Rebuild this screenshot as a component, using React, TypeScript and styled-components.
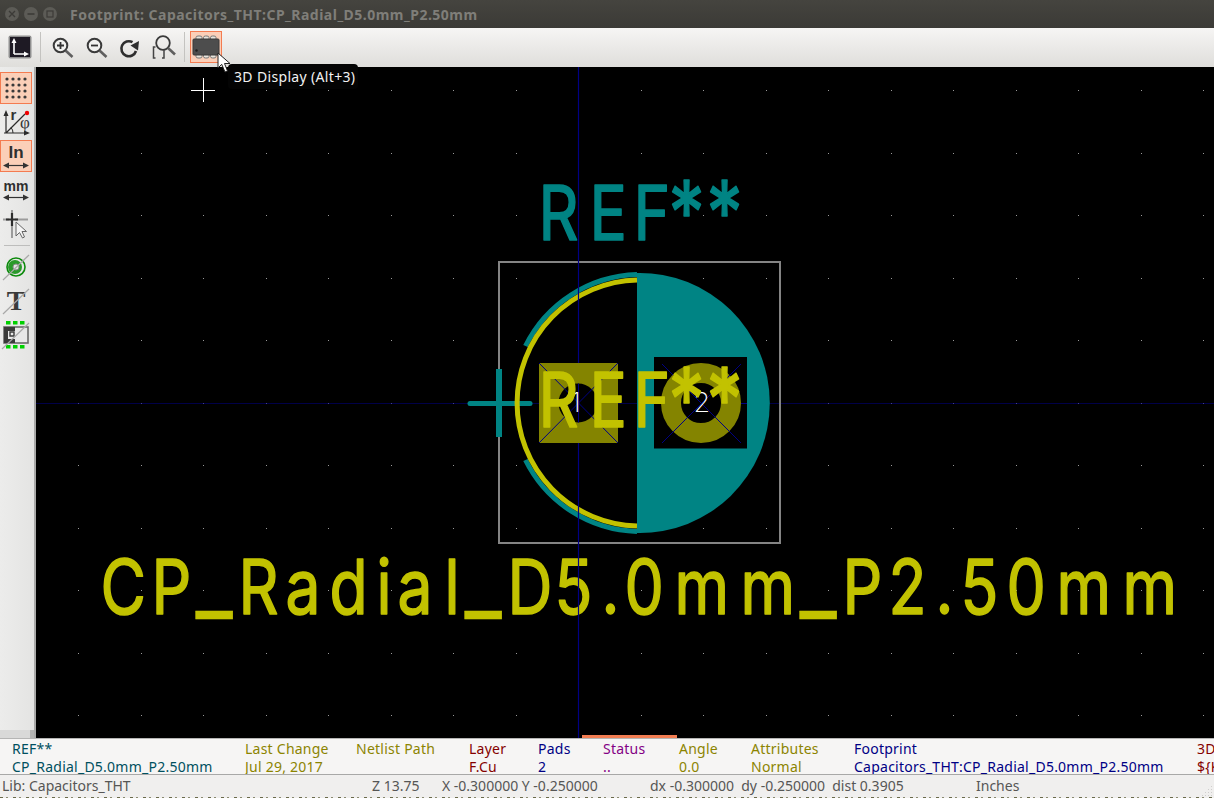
import React from "react";
import styled, { createGlobalStyle } from "styled-components";

const GlobalStyle = createGlobalStyle`
  html, body {
    margin: 0;
    padding: 0;
    background: #000;
  }
  body {
    font-family: "Noto Sans", "Open Sans", sans-serif;
    overflow: hidden;
  }
`;

const TEAL = "#008484";
const YELLOW = "#c2c200";
const PAD = "#848400";
const AXIS = "#000084";

const Window = styled.div`
  position: relative;
  width: 1214px;
  height: 798px;
  display: flex;
  flex-direction: column;
  overflow: hidden;
`;

const TitleBar = styled.div`
  height: 28px;
  flex: none;
  display: flex;
  align-items: center;
  padding-left: 5px;
  background: linear-gradient(#45443f, #3b3a36);
`;

const WindowButtons = styled.div`
  display: flex;
  gap: 5px;
`;

const WindowButton = styled.div`
  width: 14px;
  height: 14px;
  border-radius: 50%;
  background: #5c5b56;
  display: flex;
  align-items: center;
  justify-content: center;
`;

const TitleText = styled.span`
  margin-left: 13px;
  font-size: 14px;
  font-weight: 700;
  letter-spacing: 0.48px;
  color: #7f7e79;
  white-space: nowrap;
`;

const TopToolbar = styled.div`
  height: 39px;
  flex: none;
  display: flex;
  align-items: flex-start;
  gap: 2px;
  padding: 3px 0 0 4px;
  box-sizing: border-box;
  background: linear-gradient(#f6f5f4, #dfdedb);
`;

const ToolButton = styled.div<{ $active?: boolean }>`
  width: 32px;
  height: 32px;
  flex: none;
  box-sizing: border-box;
  display: flex;
  align-items: center;
  justify-content: center;
  border: 1px solid ${(p) => (p.$active ? "#f47b50" : "transparent")};
  background: ${(p) => (p.$active ? "#fbcfb8" : "transparent")};
`;

const VSeparator = styled.div`
  width: 1px;
  height: 30px;
  margin: 1px 3px 0 2px;
  flex: none;
  background: #c4c3c0;
`;

const Main = styled.div`
  flex: 1;
  min-height: 0;
  display: flex;
`;

const LeftToolbar = styled.div`
  width: 36px;
  flex: none;
  box-sizing: border-box;
  display: flex;
  flex-direction: column;
  gap: 2px;
  padding-top: 5px;
  border-right: 2px solid #a9a9a8;
  background: linear-gradient(90deg, #ececeb, #e4e4e3);
`;

const ToolbarFoot = styled.div`
  width: 30px;
  height: 8px;
  margin-top: auto;
  flex: none;
  box-shadow: 4px 0 0 #b4b4b3;
  background: #d9d9d8;
`;

const HSeparator = styled.div`
  height: 1px;
  margin: 3px 4px 3px 4px;
  flex: none;
  background: #bdbdbc;
`;

const Canvas = styled.div`
  position: relative;
  flex: 1;
  min-width: 0;
  background: #000;
`;

const Drawing = styled.svg`
  display: block;
  width: 100%;
  height: 100%;
`;

const SashMark = styled.div`
  position: absolute;
  left: 546px;
  bottom: 0;
  width: 95px;
  height: 3px;
  background: #f27d52;
`;

const MessagePanel = styled.div`
  height: 37px;
  flex: none;
  box-sizing: border-box;
  display: flex;
  padding: 1px 0 0 12px;
  border-top: 1px solid #b5b5b4;
  border-bottom: 1px solid #a8a8a7;
  background: #f6f5f4;
  overflow: hidden;
`;

const MessageColumn = styled.div<{ $width: number; $color: string }>`
  width: ${(p) => p.$width}px;
  flex: none;
  color: ${(p) => p.$color};
  font-size: 14px;
  letter-spacing: 0.24px;
  line-height: 17.5px;
  white-space: nowrap;
`;

const StatusBar = styled.div`
  height: 23px;
  flex: none;
  position: relative;
  box-sizing: border-box;
  display: flex;
  padding: 2px 0 0 2px;
  background: #f0efee;
  color: #565655;
  font-size: 14px;
  line-height: 18px;
  white-space: nowrap;
`;

const StatusField = styled.div<{ $width: number }>`
  width: ${(p) => p.$width}px;
  flex: none;
`;

const Grip = styled.svg`
  position: absolute;
  right: 1px;
  bottom: 2px;
`;

const ClippedStrip = styled.div`
  position: absolute;
  left: 0;
  right: 0;
  bottom: 0;
  height: 1px;
  background: repeating-linear-gradient(90deg, #6a6a4a 0 3px, transparent 3px 6px, #8a8a70 6px 8px, transparent 8px 13px);
`;

const Tooltip = styled.div`
  position: absolute;
  left: 228px;
  top: 64px;
  height: 25px;
  padding: 0 3px 0 6px;
  display: flex;
  align-items: center;
  border-radius: 4px;
  background: #040404;
  color: #f2f2f2;
  font-size: 14px;
  letter-spacing: 0.34px;
  white-space: nowrap;
`;

const Pointer = styled.svg`
  position: absolute;
  left: 217px;
  top: 52px;
`;

const StrokeLabel = styled.text`
  font-family: Inter, "Noto Sans", sans-serif;
  font-size: 76px;
  stroke-linejoin: round;
  stroke-width: 1.6px;
`;

const Underscore = styled.tspan`
  font-size: 100px;
  stroke-width: 0.3px;
`;

const Asterisks = styled.tspan`
  font-size: 88px;
`;

const PadNumber = styled.text`
  font-family: Inter, "Liberation Sans", sans-serif;
  font-weight: 200;
  font-size: 27px;
  fill: #fff;
`;

// glyph positions follow the stroke font of the footprint editor, which is much narrower than Inter
const SQUEEZE = 0.82;

const PlacedText = ({ text, xs, y, color }: { text: string; xs: number[]; y: number; color: string }) => (
  <g transform={`translate(0 ${y}) scale(${SQUEEZE} 1)`}>
    <StrokeLabel x={xs.map((x) => ((x - 3.5) / SQUEEZE).toFixed(1)).join(" ")} y={0} fill={color} stroke={color}>
      {text.split(/(_|\*+)/).map((part, i) => {
        if (part === "_") {
          return (
            <Underscore key={i} y={-3}>
              {part}
            </Underscore>
          );
        }
        if (part.startsWith("*")) {
          return (
            <Asterisks key={i} y={4}>
              {part}
            </Asterisks>
          );
        }
        return (
          <tspan key={i} y={0}>
            {part}
          </tspan>
        );
      })}
    </StrokeLabel>
  </g>
);

const REF_XS = [542, 593, 637, 672, 710];
const VALUE_XS = [
  104, 155, 199, 242, 289, 333, 380, 401, 448, 468, 511, 558, 605, 628, 678, 744, 803, 846, 892, 939, 964, 1010, 1060,
  1126,
];

const Icon = styled.svg`
  display: block;
  overflow: visible;
`;

const OriginIcon = () => (
  <Icon width="24" height="24" viewBox="0 0 24 24">
    <rect x="0.5" y="0.5" width="23" height="23" rx="2" fill="#8f8f8f" />
    <rect x="2" y="2" width="20" height="20" fill="#1e1a24" />
    <path d="M6 19V5M6 19H19" stroke="#fff" strokeWidth="1.6" fill="none" />
    <path d="M6 3L3.5 8H8.5ZM21 19L16 16.5V21.5Z" fill="#fff" />
  </Icon>
);

const Lens = ({ children }: { children?: React.ReactNode }) => (
  <Icon width="22" height="22" viewBox="-1 -1 22 22">
    <circle cx="8.5" cy="8.5" r="6.8" fill="#f2f2f0" stroke="#3a3a3a" strokeWidth="2" />
    <path d="M13.5 13.5L20.5 20" stroke="#5f5f5f" strokeWidth="2.6" />
    {children}
  </Icon>
);

const RedoIcon = () => (
  <Icon width="22" height="22" viewBox="0 0 22 22">
    <path d="M13.5 6.2A7.5 7.5 0 1 0 17 15" fill="none" stroke="#2e2e2e" strokeWidth="2.6" />
    <path d="M20 5L19 14.5L11.5 9.5Z" fill="#2e2e2e" />
  </Icon>
);

const ZoomFitIcon = () => (
  <Icon width="26" height="26" viewBox="0 0 26 26">
    <circle cx="12" cy="9" r="6.8" fill="none" stroke="#3a3a3a" strokeWidth="1.8" />
    <path d="M17 14L24 20.5" stroke="#5f5f5f" strokeWidth="2.6" />
    <path d="M4.5 13H2.5V24H4.5M13 16V24H11" fill="none" stroke="#444" strokeWidth="1.5" />
  </Icon>
);

const ChipIcon = () => (
  <Icon width="28" height="24" viewBox="0 0 28 24">
    <path
      d="M4 4V2.5Q4 1 6 1H8Q10 1 10 2.5V4M11.5 4V2.5Q11.5 1 13.5 1H15Q17 1 17 2.5V4M18.5 4V2.5Q18.5 1 20.5 1H22Q24 1 24 2.5V4M4 20V21.5Q4 23 6 23H8Q10 23 10 21.5V20M11.5 20V21.5Q11.5 23 13.5 23H15Q17 23 17 21.5V20M18.5 20V21.5Q18.5 23 20.5 23H22Q24 23 24 21.5V20"
      fill="#e8e4dc"
      stroke="#777"
    />
    <rect x="1" y="4" width="26" height="16" rx="1" fill="#4d4d4d" stroke="#3a3a3a" />
    <circle cx="4.5" cy="15.5" r="1.2" fill="#1f1f1f" />
  </Icon>
);

const GridIcon = () => (
  <Icon width="24" height="24" viewBox="0 0 24 24">
    {[0, 1, 2, 3].map((row) =>
      [0, 1, 2, 3].map((col) => <circle key={`${row}-${col}`} cx={3 + col * 6} cy={3 + row * 6} r="1.6" fill="#3a3a3a" />),
    )}
  </Icon>
);

const PolarIcon = () => (
  <Icon width="28" height="28" viewBox="0 0 28 28">
    <path d="M4 25V6M2 25H26M4 25L23 6" stroke="#2b2b2b" strokeWidth="1.2" fill="none" />
    <path d="M4 2L1.5 8H6.5ZM28 25L22 22.5V27.5Z" fill="#2b2b2b" />
    <path d="M11 25A8 8 0 0 0 9 19.5" stroke="#2b2b2b" fill="none" />
    <circle cx="25" cy="5" r="2.2" fill="#f00000" />
    <text x="8.5" y="12" fontFamily="Liberation Sans" fontWeight="700" fontSize="15" fill="#333">
      r
    </text>
    <text x="18" y="20" fontFamily="Liberation Serif" fontSize="17" fill="#333">
      φ
    </text>
  </Icon>
);

const UnitIcon = styled.div<{ $large?: boolean }>`
  width: 28px;
  display: flex;
  flex-direction: column;
  align-items: center;
  font-family: "Liberation Sans", sans-serif;
  font-weight: 700;
  font-size: ${(p) => (p.$large ? 17 : 14)}px;
  line-height: ${(p) => (p.$large ? 18 : 15)}px;
  color: #2f2f2f;
`;

const UnitArrow = () => (
  <Icon width="26" height="7" viewBox="0 0 26 7">
    <path d="M3 3.5H23" stroke="#333" strokeWidth="1.2" />
    <path d="M0 3.5L6 0.5V6.5ZM26 3.5L20 0.5V6.5Z" fill="#333" />
  </Icon>
);

const CursorIcon = () => (
  <Icon width="28" height="30" viewBox="0 0 28 30">
    <path d="M10 1V8M10 13V29M1 10.5H7M13 10.5H26" stroke="#9b9b9b" strokeWidth="2" />
    <path d="M10 4V17M4 10.5H16" stroke="#2d2d2d" strokeWidth="2.2" />
    <path d="M14 13V27L17.5 23.5L20.5 29L22.5 28L20 22.5H24.5Z" fill="#f5f5f5" stroke="#666" />
  </Icon>
);

const PadsIcon = () => (
  <Icon width="28" height="28" viewBox="0 0 28 28">
    <circle cx="14" cy="14" r="9" fill="none" stroke="#0c8a0c" strokeWidth="1.6" />
    <circle cx="13" cy="14" r="7" fill="#2a9a2a" />
    <circle cx="14" cy="14" r="3" fill="#dfe8df" stroke="#888" />
    <path d="M1 27L27 2" stroke="#a8a8a8" strokeWidth="1.2" />
  </Icon>
);

const TextIcon = () => (
  <Icon width="28" height="28" viewBox="0 0 28 28">
    <text x="14" y="23" textAnchor="middle" fontFamily="Liberation Serif" fontWeight="700" fontSize="28" fill="#3a3a3a">
      T
    </text>
    <path d="M1 27L27 2" stroke="#a8a8a8" strokeWidth="1.2" />
  </Icon>
);

const ModuleIcon = () => (
  <Icon width="28" height="30" viewBox="0 0 28 30">
    {[4, 11, 18].map((x) => (
      <React.Fragment key={x}>
        <rect x={x} y="1" width="4.5" height="3.5" fill="#00d000" />
        <rect x={x} y="25" width="4.5" height="3.5" fill="#00d000" />
      </React.Fragment>
    ))}
    <rect x="2" y="7" width="24" height="16" fill="#e8e8e8" stroke="#6a6a6a" strokeWidth="1.6" />
    <path d="M2 7H13V11H6V19H13V23H2Z" fill="#3a3a3a" />
    <path d="M8 12H12V16H8Z" fill="none" stroke="#3a3a3a" strokeWidth="1.4" />
    <path d="M0 29L27 3" stroke="#a8a8a8" strokeWidth="1.2" />
  </Icon>
);

const gridDots: [number, number][] = [];
for (let y = 90; y < 738; y += 62.5) {
  for (let x = 78; x < 1214; x += 62.5) {
    gridDots.push([Math.round(x), Math.round(y)]);
  }
}

const COLUMNS = [
  { width: 233, color: "#00505f", label: "REF**", value: "CP_Radial_D5.0mm_P2.50mm" },
  { width: 111, color: "#8c8400", label: "Last Change", value: "Jul 29, 2017" },
  { width: 113, color: "#8c8400", label: "Netlist Path", value: "" },
  { width: 69, color: "#840000", label: "Layer", value: "F.Cu" },
  { width: 65, color: "#000084", label: "Pads", value: "2" },
  { width: 76, color: "#840084", label: "Status", value: ".." },
  { width: 72, color: "#8c8400", label: "Angle", value: "0.0" },
  { width: 103, color: "#8c8400", label: "Attributes", value: "Normal" },
  { width: 343, color: "#000084", label: "Footprint", value: "Capacitors_THT:CP_Radial_D5.0mm_P2.50mm" },
  { width: 60, color: "#840000", label: "3D-Shape", value: "${KISYS3DMOD}" },
];

export default function App() {
  return (
    <Window>
      <GlobalStyle />
      <TitleBar>
        <WindowButtons>
          <WindowButton>
            <Icon width="8" height="8" viewBox="0 0 8 8">
              <path d="M1 1L7 7M7 1L1 7" stroke="#3c3b37" strokeWidth="1.4" />
            </Icon>
          </WindowButton>
          <WindowButton>
            <Icon width="8" height="8" viewBox="0 0 8 8">
              <path d="M0.5 4H7.5" stroke="#3c3b37" strokeWidth="1.6" />
            </Icon>
          </WindowButton>
          <WindowButton>
            <Icon width="8" height="8" viewBox="0 0 8 8">
              <rect x="1" y="1" width="6" height="6" fill="none" stroke="#3c3b37" strokeWidth="1.2" />
            </Icon>
          </WindowButton>
        </WindowButtons>
        <TitleText>Footprint: Capacitors_THT:CP_Radial_D5.0mm_P2.50mm</TitleText>
      </TitleBar>

      <TopToolbar>
        <ToolButton>
          <OriginIcon />
        </ToolButton>
        <VSeparator />
        <ToolButton>
          <Lens>
            <path d="M5 8.5H12M8.5 5V12" stroke="#333" strokeWidth="1.8" />
          </Lens>
        </ToolButton>
        <ToolButton>
          <Lens>
            <path d="M5 8.5H12" stroke="#333" strokeWidth="1.8" />
          </Lens>
        </ToolButton>
        <ToolButton>
          <RedoIcon />
        </ToolButton>
        <ToolButton>
          <ZoomFitIcon />
        </ToolButton>
        <VSeparator />
        <ToolButton $active>
          <ChipIcon />
        </ToolButton>
      </TopToolbar>

      <Main>
        <LeftToolbar>
          <ToolButton $active>
            <GridIcon />
          </ToolButton>
          <ToolButton>
            <PolarIcon />
          </ToolButton>
          <ToolButton $active>
            <UnitIcon $large>
              In
              <UnitArrow />
            </UnitIcon>
          </ToolButton>
          <ToolButton>
            <UnitIcon>
              mm
              <UnitArrow />
            </UnitIcon>
          </ToolButton>
          <ToolButton>
            <CursorIcon />
          </ToolButton>
          <HSeparator />
          <ToolButton>
            <PadsIcon />
          </ToolButton>
          <ToolButton>
            <TextIcon />
          </ToolButton>
          <ToolButton>
            <ModuleIcon />
          </ToolButton>
          <ToolbarFoot />
        </LeftToolbar>

        <Canvas>
          <Drawing viewBox="36 67 1178 671">
            {gridDots.map(([x, y]) => (
              <rect key={`${x}-${y}`} x={x} y={y} width="1" height="1" fill="#9a9a9a" />
            ))}
            <path d="M36 403.5H1214" stroke={AXIS} strokeOpacity="0.55" />

            {/* courtyard */}
            <rect x="499" y="262" width="281" height="281" fill="none" stroke="#848484" strokeWidth="2" />

            {/* silkscreen body and outline, circle centre is right of the flat edge */}
            <path d="M637 273.03A130 130 0 1 1 637 532.97Z" fill={TEAL} />
            <path
              d="M637 274.5A128.5 128.5 0 0 0 525.5 346M525.5 460A128.5 128.5 0 0 0 637 531.5"
              fill="none"
              stroke={TEAL}
              strokeWidth="5"
            />
            <path d="M470 403.5H530" stroke={TEAL} strokeWidth="5" strokeLinecap="round" />
            <path d="M499 369V437" stroke={TEAL} strokeWidth="6" />
            <path d="M637 280A123.04 123.04 0 0 0 637 526" fill="none" stroke={YELLOW} strokeWidth="5" />

            {/* pads */}
            <rect x="654" y="357" width="93" height="91.5" fill="#000" />
            <rect x="539" y="363" width="79" height="80" fill={PAD} />
            <circle cx="578" cy="403" r="19.5" fill="#000" />
            <circle cx="701" cy="403" r="30" fill="none" stroke={PAD} strokeWidth="20" />
            <path
              d="M539 363L618 443M618 363L539 443M662 364L741 443M741 364L662 443M578.5 383.5V422.5M654 403.5H661M741 403.5H747"
              stroke={AXIS}
              fill="none"
            />
            <PadNumber x="570.5" y="412">
              1
            </PadNumber>
            <PadNumber x="693.5" y="412">
              2
            </PadNumber>

            <PlacedText text="REF**" xs={REF_XS} y={240} color={TEAL} />
            <PlacedText text="REF**" xs={REF_XS} y={427} color={YELLOW} />
            <PlacedText text="CP_Radial_D5.0mm_P2.50mm" xs={VALUE_XS} y={614} color={YELLOW} />

            <path d="M578.5 67V363M578.5 443V738" stroke={AXIS} strokeWidth="1.2" />

            {/* graphic cursor */}
            <path d="M191 90.5H215M203.5 78V102" stroke="#fff" />
          </Drawing>
          <SashMark />
        </Canvas>
      </Main>

      <MessagePanel>
        {COLUMNS.map((column) => (
          <MessageColumn key={column.label} $width={column.width} $color={column.color}>
            <div>{column.label}</div>
            <div>{column.value}</div>
          </MessageColumn>
        ))}
      </MessagePanel>

      <StatusBar>
        <StatusField $width={370}>Lib: Capacitors_THT</StatusField>
        <StatusField $width={70}>Z 13.75</StatusField>
        <StatusField $width={208}>X -0.300000 Y -0.250000</StatusField>
        <StatusField $width={326}>dx -0.300000&nbsp; dy -0.250000&nbsp; dist 0.3905</StatusField>
        <StatusField $width={100}>Inches</StatusField>
        <Grip width="12" height="12" viewBox="0 0 12 12">
          {[
            [10, 2],
            [7, 5],
            [10, 5],
            [4, 8],
            [7, 8],
            [10, 8],
            [1, 11],
            [4, 11],
            [7, 11],
            [10, 11],
          ].map(([x, y]) => (
            <rect key={`${x}-${y}`} x={x} y={y} width="1" height="1" fill="#cfcecd" />
          ))}
        </Grip>
        <ClippedStrip />
      </StatusBar>

      <Tooltip>3D Display (Alt+3)</Tooltip>
      <Pointer width="16" height="22" viewBox="0 0 16 22">
        <path d="M1 1V16L4.7 12.3L8 20L10.5 19L7.5 11.5H13Z" fill="#fff" stroke="#222" />
      </Pointer>
    </Window>
  );
}
